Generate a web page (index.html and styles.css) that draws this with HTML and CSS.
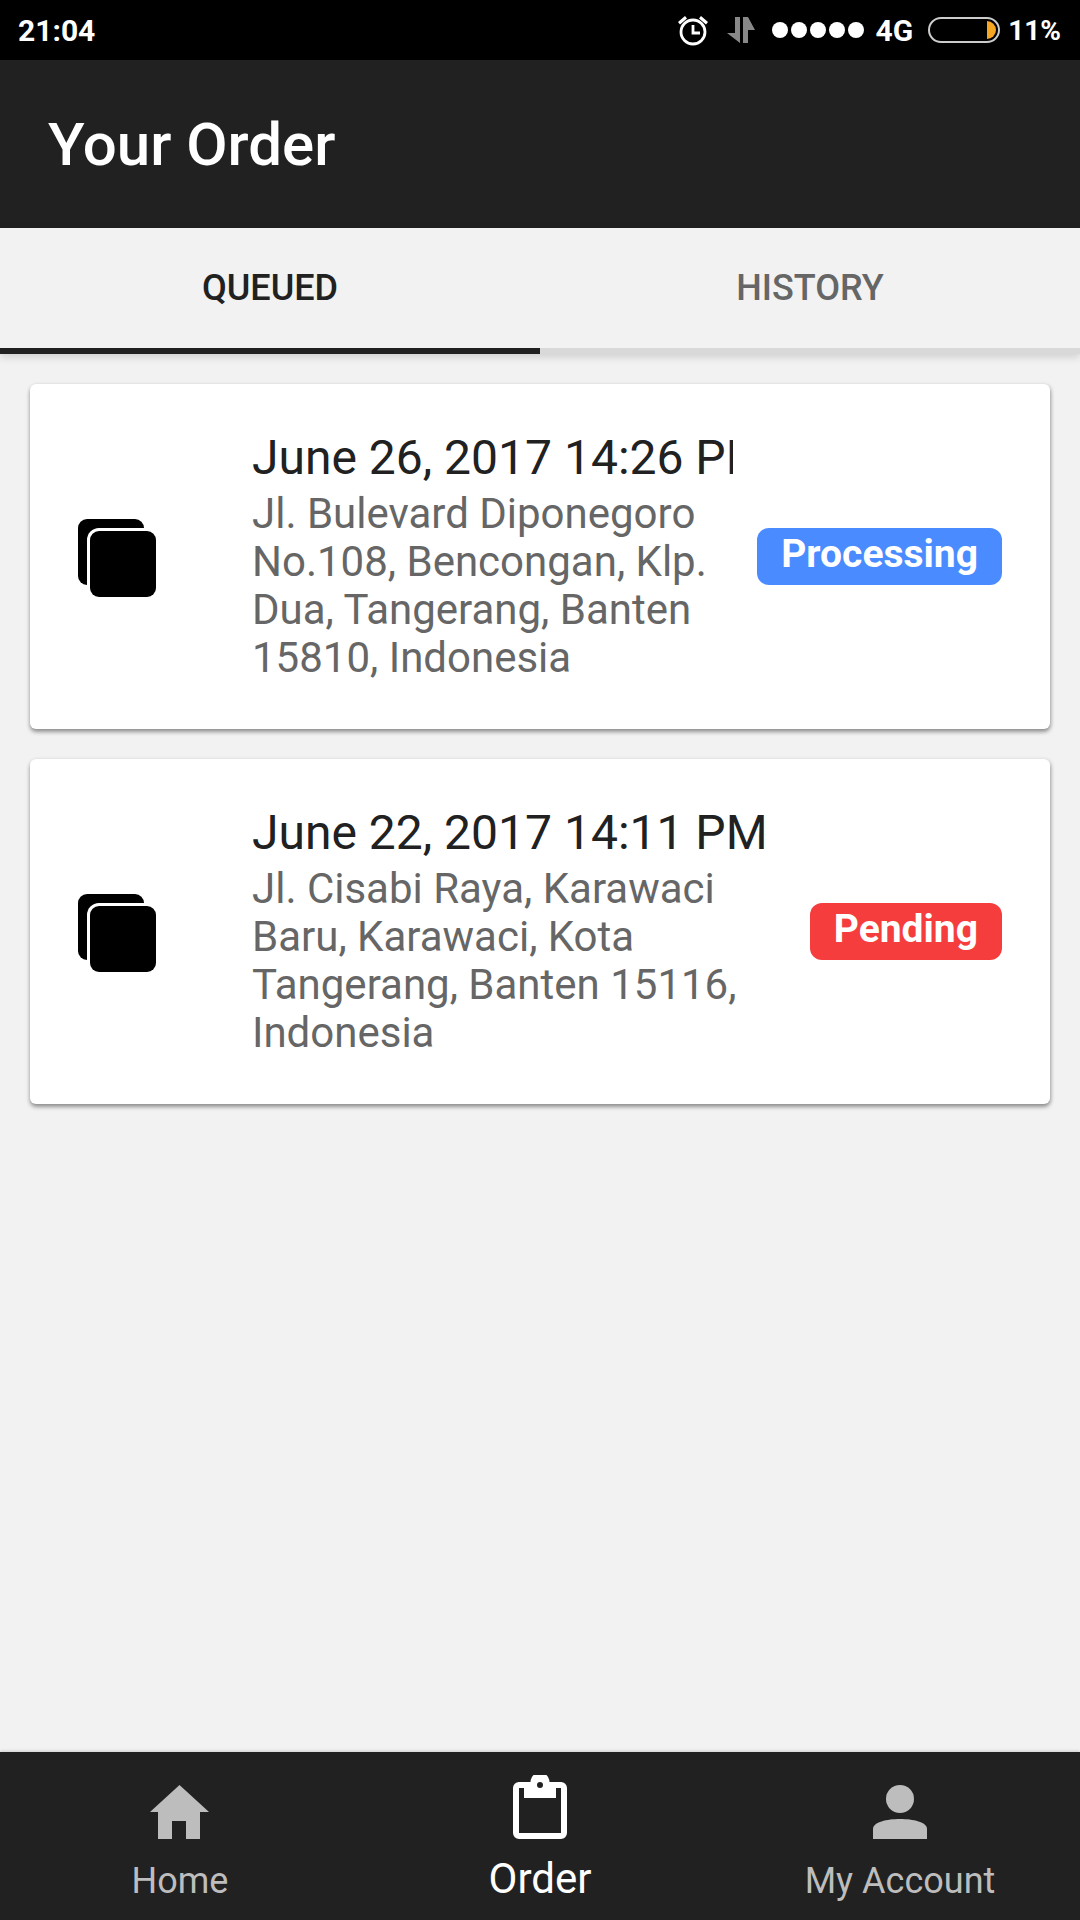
FILE: index.html
```html
<!DOCTYPE html>
<html lang="en">
<head>
    <meta charset="UTF-8">
    <meta name="viewport" content="width=device-width, initial-scale=1.0">
    <title>Your Order</title>
    <link rel="stylesheet" href="styles.css">
</head>
<body>
    <div class="status-bar">
        <span class="status-time">21:04</span>
        <div class="status-right">
            <svg class="alarm" width="32" height="32" viewBox="0 0 32 32">
                <circle cx="16" cy="18" r="12" fill="none" stroke="#fff" stroke-width="2.8"/>
                <path d="M16 11v8h7" fill="none" stroke="#fff" stroke-width="2.8"/>
                <path d="M1 8l7-6 2 2.5-7 6zM31 8l-7-6-2 2.5 7 6z" fill="#fff"/>
            </svg>
            <svg class="arrows" width="28" height="26" viewBox="0 0 28 26">
                <path d="M8 0h5v26L0 16h8z" fill="#888"/>
                <path d="M16 0h5l7 13h-7v13h-5z" fill="#888"/>
            </svg>
            <div class="signal">
                <span class="dot"></span><span class="dot"></span><span class="dot"></span><span class="dot"></span><span class="dot"></span>
            </div>
            <span class="status-text net">4G</span>
            <div class="battery"><span class="battery-level"></span></div>
            <span class="status-text">11%</span>
        </div>
    </div>

    <header class="app-header">
        <h1>Your Order</h1>
    </header>

    <nav class="tabs">
        <div class="tab active">QUEUED</div>
        <div class="tab">HISTORY</div>
    </nav>

    <main class="orders">
        <div class="card">
            <div class="stack-icon"><span class="back"></span><span class="front"></span></div>
            <div class="card-body">
                <div class="card-title">June 26, 2017 14:26 PM</div>
                <div class="card-address">Jl. Bulevard Diponegoro No.108, Bencongan, Klp. Dua, Tangerang, Banten 15810, Indonesia</div>
            </div>
            <span class="badge processing">Processing</span>
        </div>
        <div class="card">
            <div class="stack-icon"><span class="back"></span><span class="front"></span></div>
            <div class="card-body">
                <div class="card-title">June 22, 2017 14:11 PM</div>
                <div class="card-address">Jl. Cisabi Raya, Karawaci Baru, Karawaci, Kota Tangerang, Banten 15116, Indonesia</div>
            </div>
            <span class="badge pending">Pending</span>
        </div>
    </main>

    <footer class="bottom-nav">
        <div class="nav-item">
            <div class="nav-icon">
                <svg width="60" height="54" viewBox="0 0 60 54"><path d="M29.5 0L59 27H50V54H36V36H22V54H8V27H0z" fill="#bdbdbd"/></svg>
            </div>
            <span>Home</span>
        </div>
        <div class="nav-item active">
            <div class="nav-icon">
                <svg width="54" height="64" viewBox="0 0 54 64">
                    <path d="M6 7H17.5A9.5 9.5 0 0 1 36.5 7H48A6 6 0 0 1 54 13V58A6 6 0 0 1 48 64H6A6 6 0 0 1 0 58V13A6 6 0 0 1 6 7ZM6 13V58H48V13H43V23H11V13ZM27 7A3 3 0 1 0 27 13A3 3 0 1 0 27 7Z" fill="#fff" fill-rule="evenodd"/>
                </svg>
            </div>
            <span>Order</span>
        </div>
        <div class="nav-item">
            <div class="nav-icon">
                <svg width="54" height="54" viewBox="0 0 54 54">
                    <circle cx="27" cy="14" r="14" fill="#bdbdbd"/>
                    <path d="M0 54V44C0 37 14 34 27 34S54 37 54 44V54z" fill="#bdbdbd"/>
                </svg>
            </div>
            <span>My Account</span>
        </div>
    </footer>
</body>
</html>
```

FILE: styles.css
```css
* {
    box-sizing: border-box;
}
body {
    font-family: Roboto, "Noto Sans", sans-serif;
    background: #f2f2f2;
    margin: 0;
    padding: 0;
    display: flex;
    flex-direction: column;
    height: 100vh;
    color: #212121;
}

/* status bar */
.status-bar {
    height: 60px;
    background: #000;
    color: #fff;
    display: flex;
    justify-content: space-between;
    align-items: center;
    padding: 0 19px 0 18px;
}
.status-time {
    font-size: 30px;
    font-weight: 700;
}
.status-right {
    display: flex;
    align-items: center;
}
.arrows {
    margin-left: 18px;
}
.signal {
    display: flex;
    gap: 3px;
    margin-left: 17px;
}
.dot {
    width: 16px;
    height: 16px;
    border-radius: 50%;
    background: #fff;
}
.status-text {
    font-size: 28px;
    font-weight: 700;
}
.net {
    font-size: 30px;
    margin: 0 15px 0 12px;
}
.battery {
    width: 72px;
    height: 26px;
    border: 2px solid #ccc;
    border-radius: 13px;
    margin-right: 8px;
    padding: 2px;
    display: flex;
    justify-content: flex-end;
}
.battery-level {
    width: 9px;
    background: #f5a623;
    border-radius: 0 9px 9px 0;
}

/* header */
.app-header {
    height: 168px;
    background: #212121;
    color: #fff;
    display: flex;
    align-items: center;
    padding-left: 48px;
}
.app-header h1 {
    margin: 0;
    font-size: 60px;
    font-weight: 500;
}

/* tabs */
.tabs {
    display: flex;
    height: 126px;
    box-shadow: 0 3px 8px rgba(0, 0, 0, 0.15);
}
.tab {
    flex: 1;
    display: flex;
    align-items: center;
    justify-content: center;
    font-size: 36px;
    font-weight: 500;
    color: #666;
    border-bottom: 6px solid #d9d9d9;
}
.tab.active {
    color: #212121;
    border-bottom-color: #212121;
}

/* order cards */
.orders {
    flex: 1;
    display: flex;
    flex-direction: column;
    gap: 30px;
    padding: 30px;
}
.card {
    background: #fff;
    border-radius: 6px;
    box-shadow: 0 3px 4px rgba(0, 0, 0, 0.35), 1px 1px 4px rgba(0, 0, 0, 0.15);
    display: flex;
    align-items: center;
    gap: 24px;
    padding: 46px 48px 47px;
}
.stack-icon {
    position: relative;
    flex: none;
    width: 78px;
    height: 78px;
    margin-right: 72px;
    margin-top: 4px;
}
.stack-icon span {
    position: absolute;
    width: 66px;
    height: 66px;
    background: #000;
    border-radius: 9px;
}
.stack-icon .back {
    left: 0;
    top: 0;
}
.stack-icon .front {
    left: 12px;
    top: 12px;
    box-shadow: 0 0 0 3px #fff;
}
.card-body {
    flex: 1;
    min-width: 0;
    overflow: hidden;
}
.card-title {
    font-size: 48px;
    line-height: 56px;
    margin-bottom: 4px;
    white-space: nowrap;
}
.card-address {
    font-size: 42px;
    line-height: 48px;
    color: #666;
}
.badge {
    flex: none;
    height: 57px;
    line-height: 52px;
    padding: 0 24px;
    border-radius: 12px;
    color: #fff;
    font-size: 39px;
    font-weight: 700;
}
.processing {
    background: #4a8cff;
}
.pending {
    background: #f53d3d;
}

/* bottom navigation */
.bottom-nav {
    height: 168px;
    background: #212121;
    display: flex;
    box-shadow: 0 -1px 3px rgba(0, 0, 0, 0.15);
}
.nav-item {
    flex: 1;
    display: flex;
    flex-direction: column;
    align-items: center;
    padding-top: 22px;
    gap: 22px;
    color: #bdbdbd;
    font-size: 36px;
    line-height: 40px;
}
.nav-icon {
    height: 65px;
    display: flex;
    align-items: flex-end;
}
.nav-item.active {
    color: #fff;
    font-size: 42px;
}
.nav-item.active span {
    margin-top: -2px;
}
```
